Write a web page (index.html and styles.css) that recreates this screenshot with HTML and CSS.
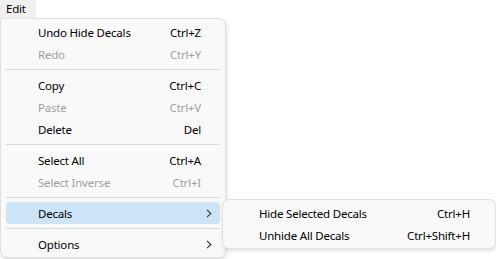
FILE: index.html
```html
<!DOCTYPE html>
<html>
<head>
<meta charset="utf-8">
<link rel="stylesheet" href="styles.css">
</head>
<body>
<div class="menubar">
  <div class="bar-item">Edit</div>
</div>
<div class="menu">
  <div class="item"><span class="label">Undo Hide Decals</span><span class="key">Ctrl+Z</span><span class="arrow"></span></div>
  <div class="item disabled"><span class="label">Redo</span><span class="key">Ctrl+Y</span><span class="arrow"></span></div>
  <div class="sep"></div>
  <div class="item"><span class="label">Copy</span><span class="key">Ctrl+C</span><span class="arrow"></span></div>
  <div class="item disabled"><span class="label">Paste</span><span class="key">Ctrl+V</span><span class="arrow"></span></div>
  <div class="item"><span class="label">Delete</span><span class="key">Del</span><span class="arrow"></span></div>
  <div class="sep"></div>
  <div class="item"><span class="label">Select All</span><span class="key">Ctrl+A</span><span class="arrow"></span></div>
  <div class="item disabled"><span class="label">Select Inverse</span><span class="key">Ctrl+I</span><span class="arrow"></span></div>
  <div class="sep"></div>
  <div class="item active"><span class="label">Decals</span><span class="key"></span><span class="arrow"><svg width="6" height="9" viewBox="0 0 6 9"><path d="M1 0.8 L4.8 4.5 L1 8.2" fill="none" stroke="#333" stroke-width="1.1"/></svg></span>
    <div class="submenu">
      <div class="subitem"><span class="label">Hide Selected Decals</span><span class="key">Ctrl+H</span></div>
      <div class="subitem"><span class="label">Unhide All Decals</span><span class="key">Ctrl+Shift+H</span></div>
    </div>
  </div>
  <div class="sep"></div>
  <div class="item"><span class="label">Options</span><span class="key"></span><span class="arrow"><svg width="6" height="9" viewBox="0 0 6 9"><path d="M1 0.8 L4.8 4.5 L1 8.2" fill="none" stroke="#333" stroke-width="1.1"/></svg></span></div>
</div>
</body>
</html>
```
FILE: styles.css
```css
html, body {
  margin: 0;
  padding: 0;
  background: #ffffff;
}
body {
  font-family: "Segoe UI", "Noto Sans", "Open Sans", sans-serif;
  font-size: 11.5px;
  letter-spacing: -0.2px;
  color: #000;
  width: 496px;
  height: 259px;
  overflow: hidden;
}
.menubar {
  display: flex;
  height: 18px;
}
.bar-item {
  background: #f0f0f0;
  padding: 0 6px;
  width: 24px;
  line-height: 18px;
}
.menu {
  width: 214px;
  padding: 2px 5px 2px 5px;
  background: #f9f9f9;
  border: 1px solid #e0e0e0;
  border-radius: 0 7px 7px 7px;
  box-shadow: 1px 2px 4px rgba(0,0,0,0.12);
}
.item {
  position: relative;
  display: flex;
  align-items: center;
  height: 22px;
  padding-left: 32px;
  border-radius: 4px;
}
.item .label {
  flex: 1;
  white-space: nowrap;
}
.item .key {
  white-space: nowrap;
}
.item .arrow {
  width: 19px;
  display: flex;
  align-items: center;
  padding-left: 5px;
  box-sizing: border-box;
}
.item.disabled {
  color: #a0a0a0;
}
.item.active {
  background: #cce4f7;
}
.sep {
  height: 1px;
  background: #d9d9d9;
  margin: 4px 0 4px 0;
}
.submenu {
  position: absolute;
  left: 216px;
  top: -3px;
  width: 262px;
  padding: 2px 5px 2px 5px;
  background: #f9f9f9;
  border: 1px solid #e0e0e0;
  border-radius: 7px;
  box-shadow: 1px 2px 4px rgba(0,0,0,0.12);
}
.subitem {
  display: flex;
  align-items: center;
  height: 22px;
  padding-left: 31px;
  padding-right: 20px;
}
.subitem .label {
  flex: 1;
  white-space: nowrap;
}
```
